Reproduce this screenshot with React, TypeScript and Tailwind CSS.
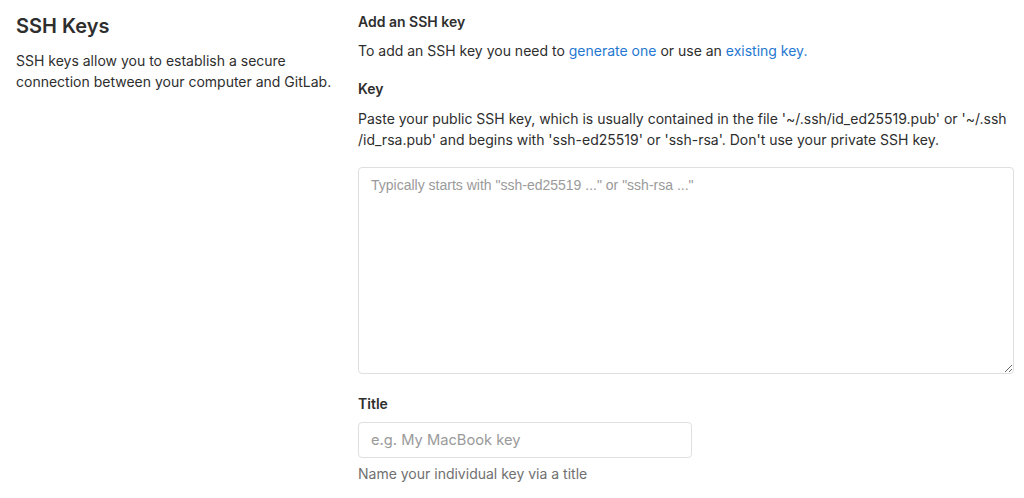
import React from 'react';

export default function App() {
  return (
    <div
      className="flex bg-white pl-4 pr-[10px] text-[14px] leading-[21px] text-[#2e2e2e]"
      style={{ fontFamily: "Inter, 'Noto Sans', sans-serif" }}
    >
      {/* Left: section intro */}
      <div className="w-[342px] shrink-0 pt-[11px] pr-4">
        <h4 className="text-[20px] font-semibold leading-[30px] text-[#2e2e2e]">SSH Keys</h4>
        <p className="mt-[9px]">
          SSH keys allow you to establish a secure connection between your computer and GitLab.
        </p>
      </div>

      {/* Right: form */}
      <div className="flex-1 pt-[11px]">
        <h5 className="font-semibold">Add an SSH key</h5>
        <p className="mt-2">
          To add an SSH key you need to{' '}
          <a href="#" className="text-[#1f78d1]">generate one</a> or use an{' '}
          <a href="#" className="text-[#1f78d1]">existing key.</a>
        </p>

        <label className="mt-[17px] block font-semibold">Key</label>
        <p className="mt-[9px]">
          Paste your public SSH key, which is usually contained in the file '~/.ssh/id_ed25519.pub' or '~/.ssh
          /id_rsa.pub' and begins with 'ssh-ed25519' or 'ssh-rsa'. Don't use your private SSH key.
        </p>
        <textarea
          className="mt-[17px] block h-[207px] w-full resize-y rounded border border-[#dfdfdf] px-3 py-[7px] font-['Liberation_Sans',sans-serif] text-[14px] placeholder:text-[#9a9a9a] focus:outline-none"
          placeholder={'Typically starts with "ssh-ed25519 ..." or "ssh-rsa ..."'}
        />

        <label className="mt-[19px] block font-semibold">Title</label>
        <input
          className="mt-2 block h-[36px] w-[334px] rounded border border-[#dfdfdf] px-3 text-[14.7px] placeholder:text-[#9a9a9a] focus:outline-none"
          placeholder="e.g. My MacBook key"
        />
        <p className="mt-[5px] text-[#707070]">Name your individual key via a title</p>
      </div>
    </div>
  );
}
